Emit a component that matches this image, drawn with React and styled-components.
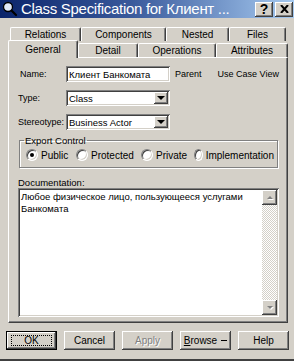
import React from "react";
import styled, { createGlobalStyle, css } from "styled-components";

const Global = createGlobalStyle`
  html, body { margin: 0; padding: 0; background: #d4d0c8; }
  body { font-family: "Liberation Sans", Arial, sans-serif; font-size: 9px; color: #000; }
`;

const raised = css`
  background: #d4d0c8;
  box-shadow: inset -1px -1px #404040, inset 1px 1px #ffffff,
    inset -2px -2px #808080, inset 2px 2px #d4d0c8;
`;

const sunken = css`
  background: #fff;
  box-shadow: inset 1px 1px #808080, inset -1px -1px #ffffff,
    inset 2px 2px #404040, inset -2px -2px #d4d0c8;
`;

const Window = styled.div`
  width: 294px;
  height: 359px;
  background: #d4d0c8;
  border-bottom: 2px solid #404040;
  display: flex;
  flex-direction: column;
`;

const TitleBar = styled.div`
  height: 18px;
  display: flex;
  align-items: center;
  background: linear-gradient(to right, #0a246a 0%, #3a5a9c 45%, #a6caf0 100%);
  padding: 0 1px 0 2px;
`;

const TitleText = styled.div`
  flex: 1;
  color: #fff;
  font-size: 15px;
  letter-spacing: -0.3px;
  line-height: 18px;
  margin-left: 3px;
  white-space: nowrap;
  overflow: hidden;
`;

const CaptionButton = styled.div`
  ${raised};
  width: 18px;
  height: 15px;
  margin-left: 2px;
  display: flex;
  align-items: center;
  justify-content: center;
  font-size: 14px;
  font-weight: bold;
  line-height: 1;
`;

const Body = styled.div`
  padding: 9px 0 0 8px;
  display: flex;
  flex-direction: column;
`;

const TabRow = styled.div`
  display: flex;
  align-items: flex-end;
  height: ${(p) => p.$h}px;
  margin-left: ${(p) => p.$indent}px;
`;

const Tab = styled.div`
  position: relative;
  width: ${(p) => p.$w}px;
  height: ${(p) => (p.$active ? 18 : 14)}px;
  margin-bottom: ${(p) => (p.$active ? -1 : 0)}px;
  z-index: ${(p) => (p.$active ? 2 : 1)};
  background: #d4d0c8;
  border-top: 1px solid #fff;
  border-left: 1px solid #fff;
  border-right: 1px solid #404040;
  border-radius: 2px 2px 0 0;
  box-shadow: inset -1px 0 #808080;
  box-sizing: border-box;
  display: flex;
  justify-content: center;
  align-items: ${(p) => (p.$active ? "flex-start" : "center")};
  padding-top: ${(p) => (p.$active ? 3 : 0)}px;
  font-size: 10px;
  line-height: 11px;
`;

const Panel = styled.div`
  width: 280px;
  height: 266px;
  box-sizing: border-box;
  border-top: 1px solid #fff;
  border-left: 1px solid #fff;
  border-right: 1px solid #404040;
  border-bottom: 1px solid #404040;
  box-shadow: inset -1px -1px #808080;
  padding: 8px 0 0 9px;
  display: flex;
  flex-direction: column;
`;

const FormGrid = styled.div`
  display: grid;
  grid-template-columns: 48px 104px 1fr;
  row-gap: 8px;
  align-items: center;
`;

const Label = styled.div`
  font-size: 9px;
  white-space: nowrap;
  padding-left: ${(p) => p.$pad || 0}px;
`;

const Field = styled.div`
  ${sunken};
  height: 16px;
  box-sizing: border-box;
  padding: 2px 3px;
  display: flex;
  align-items: center;
  font-size: 9.5px;
  position: relative;
`;

const DropButton = styled.div`
  ${raised};
  position: absolute;
  right: 2px;
  top: 2px;
  width: 14px;
  height: 12px;
  display: flex;
  align-items: center;
  justify-content: center;
  &::after {
    content: "";
    border-left: 4px solid transparent;
    border-right: 4px solid transparent;
    border-top: 4px solid #000;
  }
`;

const Aside = styled.div`
  display: flex;
  gap: 16px;
  padding-left: 5px;
  font-size: 9px;
  white-space: nowrap;
`;

const Group = styled.fieldset`
  margin: 5px 0 0 1px;
  width: 259px;
  box-sizing: border-box;
  padding: 0 0 0 4px;
  border: 1px solid #808080;
  box-shadow: 1px 1px #fff, inset 1px 1px #fff;
`;

const Legend = styled.legend`
  padding: 0 1px;
  font-size: 9.5px;
  line-height: 11px;
`;

const RadioRow = styled.div`
  display: flex;
  align-items: center;
  height: 16px;
  margin: 1px 0 4px 2px;
`;

const RadioItem = styled.label`
  display: flex;
  align-items: center;
  gap: 3px;
  width: ${(p) => p.$w}px;
  font-size: 10px;
`;

const Radio = styled.span`
  width: 12px;
  height: 12px;
  border-radius: 50%;
  box-sizing: border-box;
  background: #fff;
  border: 1px solid;
  border-color: #808080 #fff #fff #808080;
  box-shadow: inset 1px 1px #404040, inset -1px -1px #d4d0c8;
  display: flex;
  align-items: center;
  justify-content: center;
  &::after {
    content: "";
    width: 4px;
    height: 4px;
    border-radius: 50%;
    background: ${(p) => (p.$checked ? "#000" : "transparent")};
  }
`;

const DocLabel = styled.div`
  margin-top: 9px;
  font-size: 9.5px;
  line-height: 11px;
`;

const DocBox = styled.div`
  ${sunken};
  margin-top: 0;
  width: 261px;
  height: 129px;
  box-sizing: border-box;
  padding: 2px;
  display: flex;
`;

const DocText = styled.div`
  flex: 1;
  padding: 1px 0 0 1px;
  font-size: 9.5px;
  line-height: 12px;
`;

const ScrollBar = styled.div`
  width: 15px;
  display: flex;
  flex-direction: column;
  background-image: repeating-conic-gradient(#ffffff 0 25%, #d4d0c8 0 50%);
  background-size: 2px 2px;
`;

const ScrollArrow = styled.div`
  ${raised};
  height: 15px;
  display: flex;
  align-items: center;
  justify-content: center;
  margin-top: ${(p) => (p.$down ? "auto" : "0")};
  &::after {
    content: "";
    border-left: 3px solid transparent;
    border-right: 3px solid transparent;
    ${(p) =>
      p.$down
        ? "border-top: 3px solid #808080;"
        : "border-bottom: 3px solid #808080;"}
    filter: drop-shadow(1px 1px #fff);
  }
`;

const ButtonRow = styled.div`
  display: flex;
  gap: 7px;
  margin: 8px 0 0 -2px;
`;

const Button = styled.div`
  ${raised};
  width: 51px;
  height: 19px;
  box-sizing: border-box;
  display: flex;
  align-items: center;
  justify-content: center;
  font-size: 10px;
  position: relative;
  color: ${(p) => (p.$disabled ? "#808080" : "#000")};
  text-shadow: ${(p) => (p.$disabled ? "1px 1px #fff" : "none")};
  ${(p) =>
    p.$default &&
    css`
      border: 1px solid #000;
      box-shadow: inset -1px -1px #404040, inset 1px 1px #ffffff,
        inset -2px -2px #808080;
      &::before {
        content: "";
        position: absolute;
        inset: 3px 4px;
        border: 1px dotted #000;
      }
    `}
`;

const MenuArrow = styled.span`
  display: inline-block;
  margin-left: 4px;
  width: 6px;
  height: 1px;
  background: #000;
  vertical-align: middle;
`;

const SearchIcon = () => (
  <svg width="16" height="16" viewBox="0 0 16 16">
    <circle cx="6" cy="6" r="4.5" fill="#dfe8f6" stroke="#000" strokeWidth="1.3" />
    <path d="M9.5 9.5 L14 14" stroke="#000" strokeWidth="2.2" strokeLinecap="round" />
  </svg>
);

export default function App() {
  return (
    <>
      <Global />
      <Window>
        <TitleBar>
          <SearchIcon />
          <TitleText>Class Specification for Клиент ...</TitleText>
          <CaptionButton>?</CaptionButton>
          <CaptionButton>
            <svg width="9" height="8" viewBox="0 0 9 8">
              <path d="M1 0 L8 8 M8 0 L1 8" stroke="#000" strokeWidth="2" />
            </svg>
          </CaptionButton>
        </TitleBar>
        <Body>
          <TabRow $h={14} $indent={2}>
            <Tab $w={71}>Relations</Tab>
            <Tab $w={85}>Components</Tab>
            <Tab $w={63}>Nested</Tab>
            <Tab $w={57}>Files</Tab>
          </TabRow>
          <TabRow $h={16} $indent={0}>
            <Tab $w={70} $active>General</Tab>
            <Tab $w={60}>Detail</Tab>
            <Tab $w={78}>Operations</Tab>
            <Tab $w={72}>Attributes</Tab>
          </TabRow>
          <Panel>
            <FormGrid>
              <Label $pad={2}>Name:</Label>
              <Field>Клиент Банкомата</Field>
              <Aside>
                <span>Parent</span>
                <span>Use Case View</span>
              </Aside>
              <Label>Type:</Label>
              <Field>
                Class
                <DropButton />
              </Field>
              <span />
              <Label>Stereotype:</Label>
              <Field>
                Business Actor
                <DropButton />
              </Field>
              <span />
            </FormGrid>
            <Group>
              <Legend>Export Control</Legend>
              <RadioRow>
                <RadioItem $w={50}>
                  <Radio $checked />
                  Public
                </RadioItem>
                <RadioItem $w={65}>
                  <Radio />
                  Protected
                </RadioItem>
                <RadioItem $w={53}>
                  <Radio />
                  Private
                </RadioItem>
                <RadioItem $w={80}>
                  <Radio />
                  Implementation
                </RadioItem>
              </RadioRow>
            </Group>
            <DocLabel>Documentation:</DocLabel>
            <DocBox>
              <DocText>
                Любое физическое лицо, пользующееся услугами
                <br />
                Банкомата
              </DocText>
              <ScrollBar>
                <ScrollArrow />
                <ScrollArrow $down />
              </ScrollBar>
            </DocBox>
          </Panel>
          <ButtonRow>
            <Button $default>OK</Button>
            <Button>Cancel</Button>
            <Button $disabled>Apply</Button>
            <Button>
              <u>B</u>rowse
              <MenuArrow />
            </Button>
            <Button>Help</Button>
          </ButtonRow>
        </Body>
      </Window>
    </>
  );
}
